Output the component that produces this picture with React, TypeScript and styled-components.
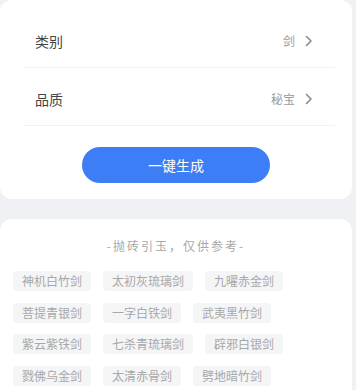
import React from "react";
import styled, { createGlobalStyle } from "styled-components";

const GlobalStyle = createGlobalStyle`
  body {
    margin: 0;
    background: #f0f1f4;
    font-family: "Noto Sans CJK SC", "Noto Sans", sans-serif;
  }
`;

const fields = [
  { label: "类别", value: "剑" },
  { label: "品质", value: "秘宝" },
];

const names = [
  "神机白竹剑",
  "太初灰琉璃剑",
  "九曜赤金剑",
  "菩提青银剑",
  "一字白铁剑",
  "武夷黑竹剑",
  "紫云紫铁剑",
  "七杀青琉璃剑",
  "辟邪白银剑",
  "戮佛乌金剑",
  "太清赤骨剑",
  "劈地暗竹剑",
];

const Chevron = () => (
  <svg width="8" height="12" viewBox="0 0 8 12">
    <path d="M1.5 1.5 L6 6 L1.5 10.5" fill="none" stroke="#8a8a8a" strokeWidth="1.6" strokeLinecap="round" strokeLinejoin="round" />
  </svg>
);

export default function App() {
  return (
    <Page>
      <GlobalStyle />
      <FormCard>
        {fields.map((f) => (
          <Row key={f.label}>
            <Label>{f.label}</Label>
            <Value>
              {f.value}
              <Chevron />
            </Value>
          </Row>
        ))}
        <ButtonWrap>
          <Generate>一键生成</Generate>
        </ButtonWrap>
      </FormCard>
      <SuggestCard>
        <Heading>-抛砖引玉，仅供参考-</Heading>
        <Tags>
          {names.map((n) => (
            <Tag key={n}>{n}</Tag>
          ))}
        </Tags>
      </SuggestCard>
    </Page>
  );
}

const Page = styled.div`
  width: 352px;
  display: flex;
  flex-direction: column;
  gap: 20px;
`;

const Card = styled.div`
  background: #fff;
  border-radius: 12px;
`;

const FormCard = styled(Card)`
  padding: 10px 17px 16px 23px;
`;

const Row = styled.div`
  box-sizing: border-box;
  height: 58px;
  display: flex;
  align-items: center;
  justify-content: space-between;
  padding: 4px 22px 0 12px;
  border-bottom: 1px solid #f3f3f5;
`;

const Label = styled.span`
  font-size: 14px;
  color: #444;
`;

const Value = styled.span`
  display: flex;
  align-items: center;
  gap: 10px;
  font-size: 12px;
  color: #9a9a9a;
`;

const ButtonWrap = styled.div`
  display: flex;
  justify-content: center;
  padding-top: 21px;
  margin-left: -6px;
`;

const Generate = styled.button`
  width: 188px;
  height: 36px;
  border: none;
  border-radius: 18px;
  background: #3d7ef7;
  color: #fff;
  font-family: inherit;
  font-size: 14px;
  cursor: pointer;
`;

const SuggestCard = styled(Card)`
  padding: 18px 13px 20px;
  min-height: 200px;
`;

const Heading = styled.div`
  text-align: center;
  font-size: 12px;
  line-height: 18px;
  letter-spacing: 2px;
  color: #a8a8a8;
  margin-bottom: 16px;
`;

const Tags = styled.div`
  display: flex;
  flex-wrap: wrap;
  gap: 11.5px 12px;
`;

const Tag = styled.span`
  height: 20px;
  line-height: 20px;
  padding: 0 9px;
  font-size: 12px;
  color: #a8a8a8;
  background: #f4f5f7;
  border-radius: 4px;
`;
